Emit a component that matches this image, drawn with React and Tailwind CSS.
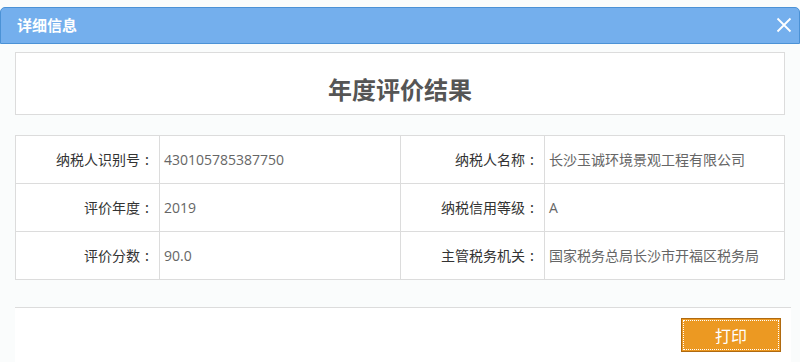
import React from 'react';

const rows = [
  ['纳税人识别号', '430105785387750', '纳税人名称', '长沙玉诚环境景观工程有限公司'],
  ['评价年度', '2019', '纳税信用等级', 'A'],
  ['评价分数', '90.0', '主管税务机关', '国家税务总局长沙市开福区税务局'],
];

const valueFont = { fontFamily: '"Open Sans", "Noto Sans CJK SC", sans-serif' };

const Label = ({ text }) => (
  <td className="border border-[#dcdcdc] text-right pr-[5px] text-[#333]">
    {text}
    <span className="inline-block w-[14px] text-center">:</span>
  </td>
);

const Value = ({ text }) => (
  <td className="border border-[#dcdcdc] pl-[4px] text-[#666]" style={valueFont}>{text}</td>
);

const App = () => {
  return (
    <div
      className="w-[800px] h-[362px] overflow-hidden bg-[#fafcfc] pt-[7px]"
      style={{ fontFamily: '"Noto Sans CJK SC", "Liberation Sans", sans-serif' }}
    >
      {/* title bar */}
      <div className="h-[37px] rounded-t-[5px] border border-[#4b92d6] bg-[#74afed] flex items-center justify-between pl-[16px] pr-[7px]">
        <span className="text-[15px] font-bold text-white">详细信息</span>
        <svg width="16" height="16" viewBox="0 0 16 16" className="mb-[1px]">
          <path d="M1.5 1.5 L14.5 14.5 M14.5 1.5 L1.5 14.5" stroke="#fff" strokeWidth="1.8" />
        </svg>
      </div>

      <div className="px-[15px] pt-[8px]">
        <div className="h-[63px] border border-[#dcdcdc] bg-white flex items-center justify-center pt-[10px]">
          <h1 className="text-[24px] font-bold text-[#555]">年度评价结果</h1>
        </div>

        <table className="mt-[20px] w-[770px] border-collapse bg-white text-[14px] table-fixed">
          <colgroup>
            <col className="w-[144px]" />
            <col className="w-[241px]" />
            <col className="w-[144px]" />
            <col />
          </colgroup>
          <tbody>
            {rows.map((r, i) => (
              <tr key={i} className="h-[48px]">
                <Label text={r[0]} />
                <Value text={r[1]} />
                <Label text={r[2]} />
                <Value text={r[3]} />
              </tr>
            ))}
          </tbody>
        </table>
      </div>

      <div className="mt-[27px] ml-[15px] mr-[9px] h-[60px] border-t border-[#dcdcdc] bg-white flex justify-end pt-[10px] pr-[10px]">
        <button className="w-[100px] h-[34px] bg-[#ec9922] border border-[#b06a10] text-white text-[16px] flex items-center justify-center">
          <span className="border border-dotted border-white w-[96px] h-[30px] flex items-center justify-center">打印</span>
        </button>
      </div>
    </div>
  );
};

export default App;
